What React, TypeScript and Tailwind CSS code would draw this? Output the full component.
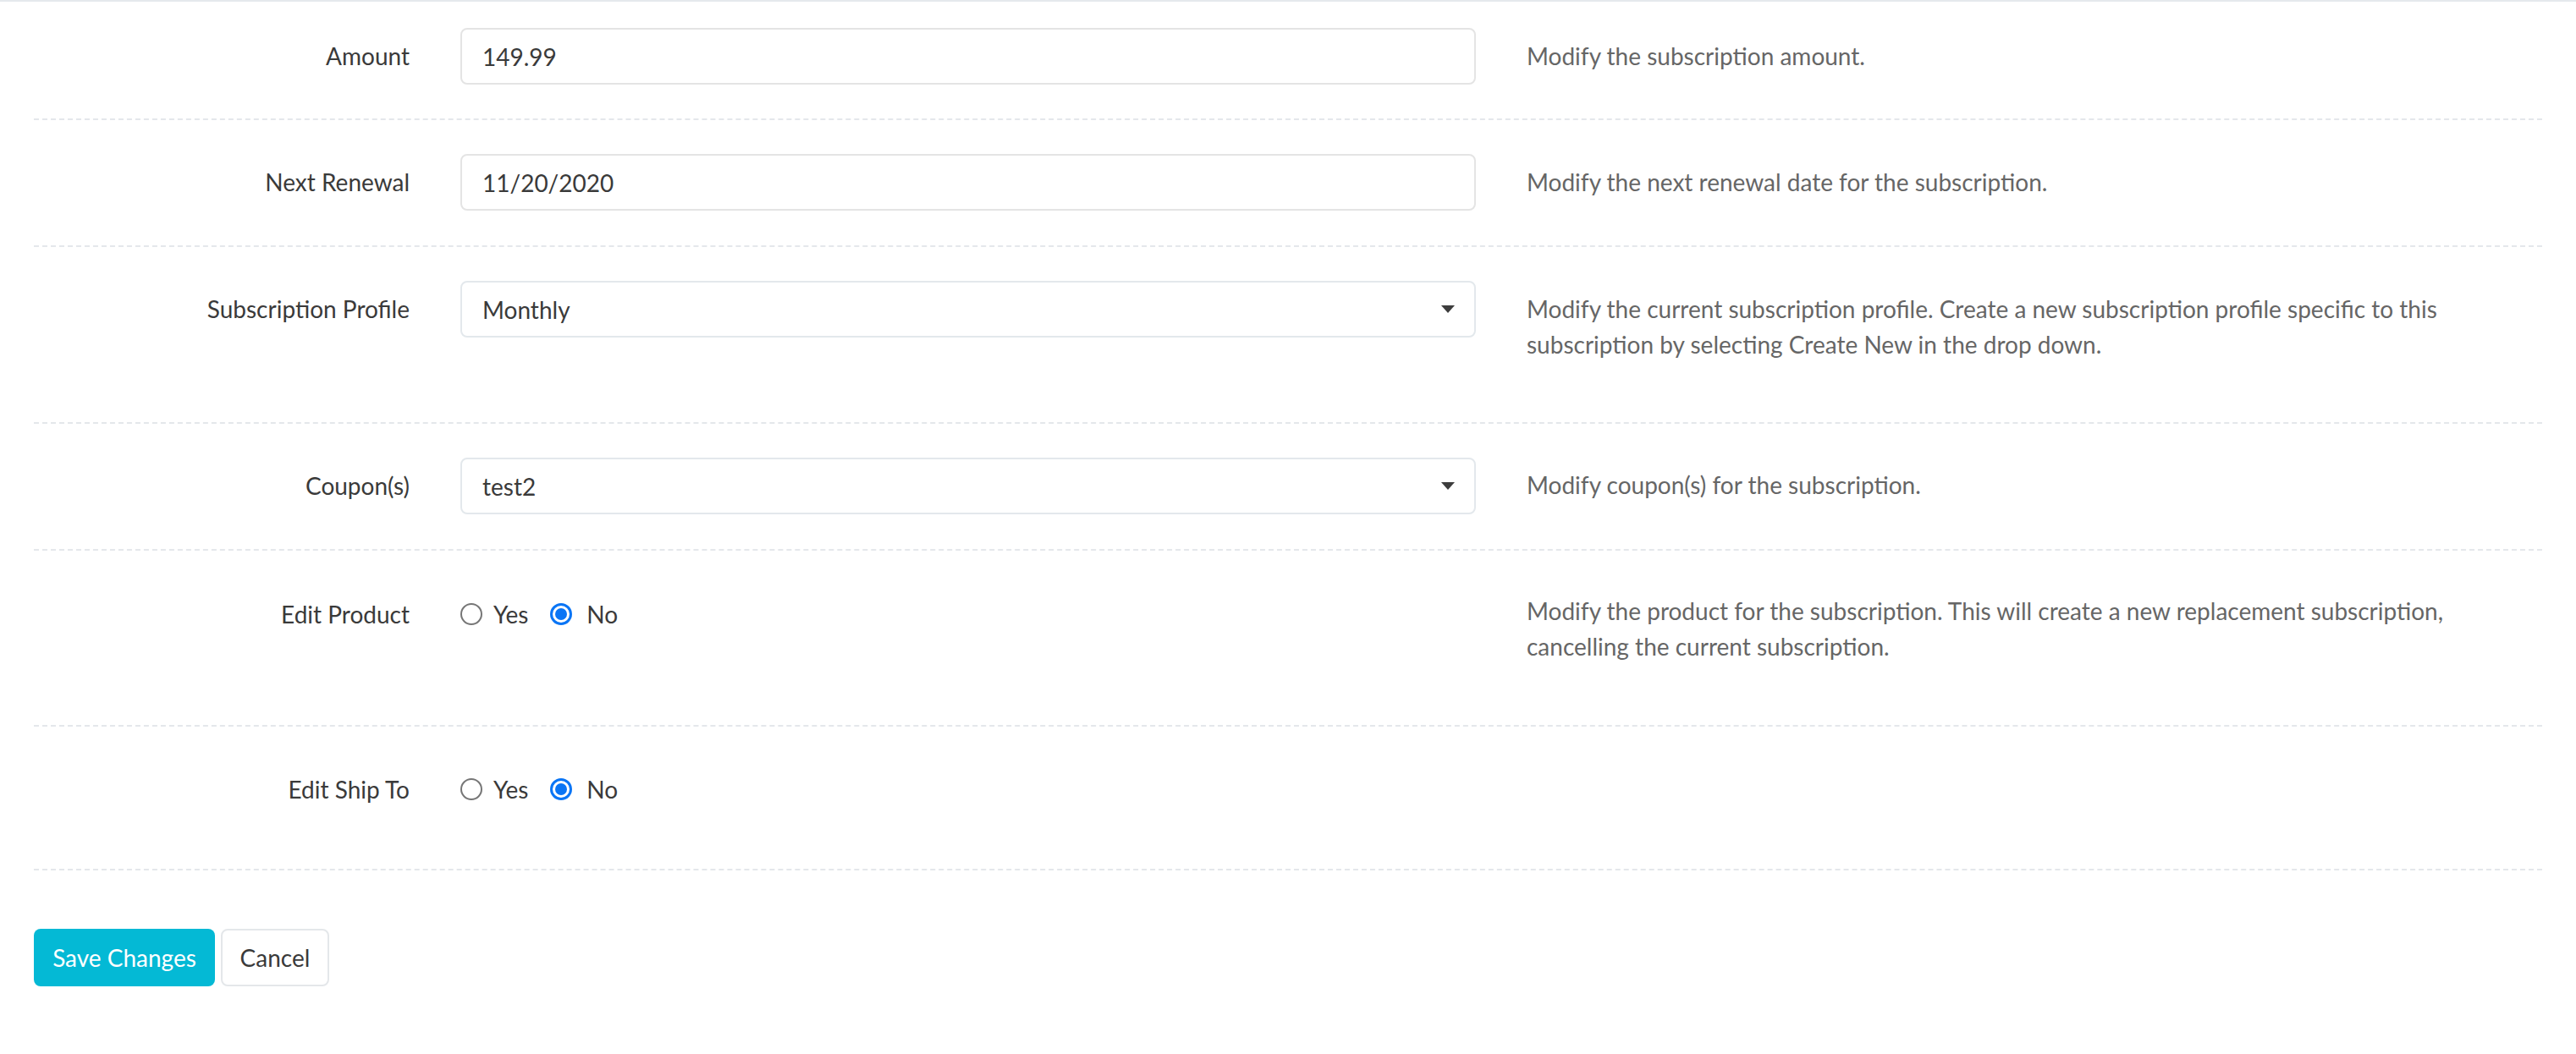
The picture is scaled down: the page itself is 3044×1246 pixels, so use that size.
import React from "react";

const font = { fontFamily: "Lato, 'Open Sans', Arial, sans-serif" };

function Radio({ checked }: { checked: boolean }) {
  if (checked) {
    return (
      <span className="flex h-[26px] w-[26px] shrink-0 items-center justify-center rounded-full border-[3px] border-[#0a75f5] bg-white">
        <span className="h-[14px] w-[14px] rounded-full bg-[#0a75f5]" />
      </span>
    );
  }
  return <span className="h-[26px] w-[26px] shrink-0 rounded-full border-2 border-[#767676] bg-white" />;
}

function RadioGroup() {
  return (
    <div className="flex h-[42px] items-center text-[28px] text-[#3a3a3a]">
      <Radio checked={false} />
      <span className="ml-[13px]">Yes</span>
      <span className="ml-[26px]">
        <Radio checked={true} />
      </span>
      <span className="ml-[17px]">No</span>
    </div>
  );
}

function TextInput({ value }: { value: string }) {
  return (
    <div className="flex h-[67px] w-[1200px] items-center rounded-[8px] border-2 border-[#e4e4e4] bg-white pl-[24px] text-[28px] text-[#3a3a3a]">
      {value}
    </div>
  );
}

function SelectInput({ value }: { value: string }) {
  return (
    <div className="flex h-[67px] w-[1200px] items-center justify-between rounded-[8px] border-2 border-[#e3e8ec] bg-white pl-[24px] pr-[23px] text-[28px] text-[#3a3a3a]">
      <span>{value}</span>
      <svg width="16" height="9" viewBox="0 0 16 9">
        <path d="M0 0 L16 0 L8 9 Z" fill="#3d3d3d" />
      </svg>
    </div>
  );
}

function Row({
  label,
  control,
  desc,
  rowClass,
  labelPad,
  descPad,
}: {
  label: string;
  control: React.ReactNode;
  desc?: React.ReactNode;
  rowClass: string;
  labelPad: string;
  descPad: string;
}) {
  return (
    <div className={"flex items-start border-b-2 border-dashed border-[#e4e7eb] " + rowClass}>
      <div className={"w-[444px] shrink-0 text-right text-[28px] leading-[42px] text-[#3a3a3a] " + labelPad}>{label}</div>
      <div className="ml-[60px] w-[1200px] shrink-0">{control}</div>
      <div className={"ml-[60px] flex-1 pr-[30px] text-[28px] leading-[42px] text-[#666666] " + descPad}>{desc}</div>
    </div>
  );
}

export default function App() {
  return (
    <div className="min-h-screen w-full bg-white" style={font}>
      <div className="h-[2px] w-full bg-[#e5e9ed]" />
      <div className="px-[40px]">
        <Row
          rowClass="h-[140px] pt-[31px]"
          labelPad="pt-[12px]"
          descPad="pt-[12px]"
          label="Amount"
          control={<TextInput value="149.99" />}
          desc="Modify the subscription amount."
        />
        <Row
          rowClass="h-[150px] pt-[40px]"
          labelPad="pt-[12px]"
          descPad="pt-[12px]"
          label="Next Renewal"
          control={<TextInput value="11/20/2020" />}
          desc="Modify the next renewal date for the subscription."
        />
        <Row
          rowClass="h-[209px] pt-[40px]"
          labelPad="pt-[12px]"
          descPad="pt-[12px]"
          label="Subscription Profile"
          control={<SelectInput value="Monthly" />}
          desc={
            <>
              Modify the current subscription profile. Create a new subscription profile specific to this
              <br />
              subscription by selecting Create New in the drop down.
            </>
          }
        />
        <Row
          rowClass="h-[150px] pt-[40px]"
          labelPad="pt-[12px]"
          descPad="pt-[11px]"
          label="Coupon(s)"
          control={<SelectInput value="test2" />}
          desc="Modify coupon(s) for the subscription."
        />
        <Row
          rowClass="h-[208px] pt-[40px]"
          labelPad="pt-[14px]"
          descPad="pt-[10px]"
          label="Edit Product"
          control={
            <div className="pt-[14px]">
              <RadioGroup />
            </div>
          }
          desc={
            <>
              Modify the product for the subscription. This will create a new replacement subscription,
              <br />
              cancelling the current subscription.
            </>
          }
        />
        <Row
          rowClass="h-[170px] pt-[40px]"
          labelPad="pt-[13px]"
          descPad="pt-[10px]"
          label="Edit Ship To"
          control={
            <div className="pt-[13px]">
              <RadioGroup />
            </div>
          }
        />
        <div className="mt-[69px] flex items-center gap-[7px]">
          <button className="flex h-[68px] w-[214px] items-center justify-center rounded-[8px] bg-[#04b9d5] text-[28px] text-white">
            Save Changes
          </button>
          <button className="flex h-[68px] w-[128px] items-center justify-center rounded-[8px] border-2 border-[#e4e7ea] bg-white text-[28px] text-[#3a3a3a]">
            Cancel
          </button>
        </div>
      </div>
    </div>
  );
}
